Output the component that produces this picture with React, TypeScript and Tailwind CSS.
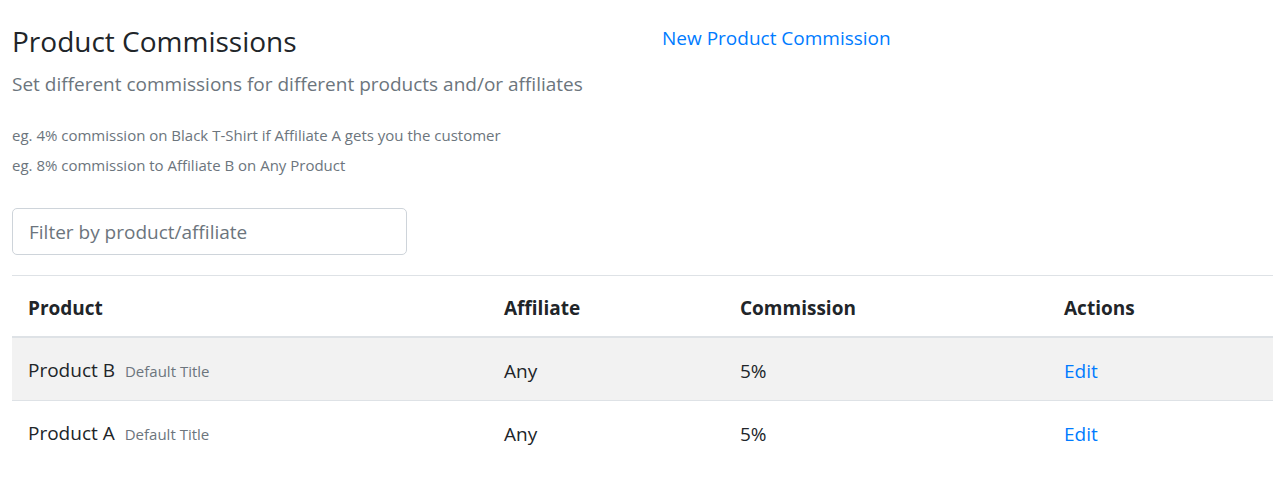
import React, { useState } from "react";

const rows = [
  { product: "Product B", variant: "Default Title", affiliate: "Any", commission: "5%" },
  { product: "Product A", variant: "Default Title", affiliate: "Any", commission: "5%" },
];

export default function App() {
  const [filter, setFilter] = useState("");

  return (
    <main
      className="bg-white min-h-screen text-[#212529] px-3 pt-[25px]"
      style={{ fontFamily: '"Open Sans", "Noto Sans", sans-serif' }}
    >
      <div className="flex">
        <div className="w-[642px]">
          <h1 className="text-[28px] leading-[1.2] font-normal mb-[11px]">Product Commissions</h1>
          <p className="text-[19px] leading-[1.5] text-[#6c757d]">
            Set different commissions for different products and/or affiliates
          </p>
        </div>
        <div className="pl-[8px]">
          <a href="#" className="text-[19px] leading-[1.5] text-[#007bff] block -mt-px">
            New Product Commission
          </a>
        </div>
      </div>

      <div className="mt-[22px] text-[15px] leading-[30px] text-[#6c757d]">
        <p>eg. 4% commission on Black T-Shirt if Affiliate A gets you the customer</p>
        <p>eg. 8% commission to Affiliate B on Any Product</p>
      </div>

      <input
        type="text"
        value={filter}
        onChange={e => setFilter(e.target.value)}
        placeholder="Filter by product/affiliate"
        className="mt-[28px] w-[395px] h-[47px] px-4 text-[19px] border border-[#ced4da] rounded-[5px] placeholder:text-[#6c757d] outline-none"
      />

      <table className="w-full mt-[20px] border-collapse text-[19px]">
        <thead>
          <tr className="border-t border-[#dee2e6]">
            <th className="w-[476px] text-left font-bold px-4 pt-[18px] pb-[14px] leading-[28px] border-b-2 border-[#dee2e6]">Product</th>
            <th className="w-[236px] text-left font-bold px-4 pt-[18px] pb-[14px] leading-[28px] border-b-2 border-[#dee2e6]">Affiliate</th>
            <th className="w-[324px] text-left font-bold px-4 pt-[18px] pb-[14px] leading-[28px] border-b-2 border-[#dee2e6]">Commission</th>
            <th className="text-left font-bold px-4 pt-[18px] pb-[14px] leading-[28px] border-b-2 border-[#dee2e6]">Actions</th>
          </tr>
        </thead>
        <tbody>
          {rows.map((r, i) => (
            <tr key={r.product} className={i === 0 ? "bg-[#f2f2f2]" : "border-t border-[#dee2e6]"}>
              <td className="px-4 pt-[17px] pb-[14px] leading-[30px]">
                {r.product}
                <span className="ml-[10px] text-[15px] text-[#6c757d]">{r.variant}</span>
              </td>
              <td className="px-4 pt-[17px] pb-[14px] leading-[30px]">{r.affiliate}</td>
              <td className="px-4 pt-[17px] pb-[14px] leading-[30px]">{r.commission}</td>
              <td className="px-4 pt-[17px] pb-[14px] leading-[30px]">
                <a href="#" className="text-[#007bff]">Edit</a>
              </td>
            </tr>
          ))}
        </tbody>
      </table>
    </main>
  );
}
